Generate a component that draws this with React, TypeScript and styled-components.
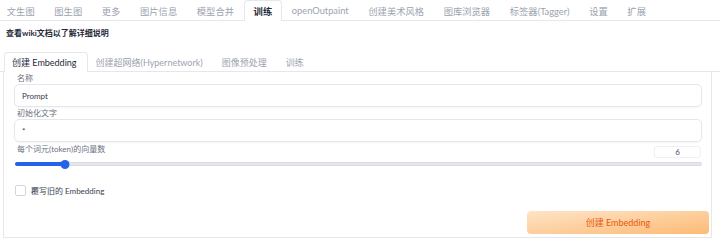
import React, { ReactElement } from "react";
import styled, { createGlobalStyle } from "styled-components";

const GlobalStyle = createGlobalStyle`
  body {
    margin: 0;
    background: #fff;
    font-family: Lato, "Noto Sans CJK SC", sans-serif;
    color: #374151;
  }
`;

const Page = styled.div`
  width: 720px;
  height: 246px;
  overflow: hidden;
`;

const TopBar = styled.div`
  display: flex;
  height: 20px;
  margin-left: -3px;
  border-bottom: 1px solid #e5e7eb;
`;

const TopTab = styled.div<{ $active?: boolean }>`
  display: flex;
  align-items: center;
  padding: 0 8.8px;
  font-size: 9.3px;
  color: ${(p) => (p.$active ? "#1f2937" : "#9ca3af")};
  font-weight: ${(p) => (p.$active ? 700 : 400)};
  background: #fff;
  border: 1px solid ${(p) => (p.$active ? "#e5e7eb" : "transparent")};
  border-bottom: none;
  border-radius: 4px 4px 0 0;
  margin-bottom: ${(p) => (p.$active ? "-1px" : "0")};
  white-space: nowrap;
`;

const Info = styled.div`
  padding: 6px 0 0 6px;
  height: 12px;
  line-height: 12px;
  font-size: 8px;
  font-weight: 700;
  color: #1f2937;
`;

const SubBar = styled.div`
  display: flex;
  height: 19px;
  margin-top: 13px;
  padding-left: 4px;
  border-bottom: 1px solid #e5e7eb;
`;

const SubTab = styled(TopTab)`
  padding: 0 10px 0 7px;
  font-size: 9px;
  font-weight: 400;
  color: ${(p) => (p.$active ? "#1f2937" : "#9ca3af")};
`;

const Panel = styled.div`
  margin: 0 8px 0 3px;
  height: 166px;
  box-sizing: border-box;
  border: 1px solid #e5e7eb;
  border-top: none;
  padding: 0 2px 3px 10px;
  display: flex;
  flex-direction: column;
`;

const Form = styled.div`
  margin-right: 7px;
  display: flex;
  flex-direction: column;
`;

const Label = styled.div`
  height: 12px;
  padding-left: 3px;
  font-size: 8px;
  line-height: 12px;
  color: #6b7280;
`;

const TextBox = styled.div`
  height: 23px;
  box-sizing: border-box;
  border: 1px solid #e5e7eb;
  border-radius: 5px;
  box-shadow: 0 1px 2px rgba(0, 0, 0, 0.04);
  padding: 0 7px;
  display: flex;
  align-items: center;
  font-size: 8px;
  color: #374151;
`;

const SliderHead = styled.div`
  display: flex;
  justify-content: space-between;
  align-items: flex-start;
  height: 17px;
  padding-top: 1px;
  box-sizing: border-box;
`;

const NumberBox = styled.div`
  width: 47px;
  height: 12px;
  margin-top: 3px;
  box-sizing: border-box;
  border: 1px solid #eef0f3;
  border-radius: 3px;
  font-size: 8px;
  color: #4b5563;
  display: flex;
  align-items: center;
  justify-content: center;
  margin-right: 1px;
`;

const Track = styled.div`
  position: relative;
  height: 10px;
  margin-left: 1px;
  display: flex;
  align-items: center;
`;

const Rail = styled.div`
  flex: 1;
  height: 4px;
  border-radius: 2px;
  background: #e5e7eb;
  border: 1px solid #d9dce1;
  box-sizing: border-box;
`;

const Fill = styled.div`
  position: absolute;
  left: 0;
  height: 4px;
  border-radius: 2px;
  background: #2563eb;
`;

const Thumb = styled.div`
  position: absolute;
  width: 9px;
  height: 9px;
  border-radius: 50%;
  background: #2563eb;
  transform: translateX(-50%);
`;

const CheckRow = styled.label`
  display: flex;
  align-items: center;
  gap: 5px;
  margin-top: 14px;
  margin-left: 1px;
  height: 14px;
  font-size: 8px;
  color: #374151;
`;

const Box = styled.span`
  width: 9px;
  height: 9px;
  border: 1px solid #d1d5db;
  border-radius: 2px;
  background: #fff;
`;

const Actions = styled.div`
  display: flex;
  justify-content: flex-end;
  margin-top: auto;
`;

const Primary = styled.button`
  width: 182px;
  height: 23px;
  border: none;
  border-radius: 4px;
  background: linear-gradient(to bottom right, #fee4c8, #fdba74);
  color: #ea580c;
  font-family: Lato, "Noto Sans CJK SC", sans-serif;
  font-size: 9px;
  cursor: pointer;
`;

const topTabs = [
  "文生图",
  "图生图",
  "更多",
  "图片信息",
  "模型合并",
  "训练",
  "openOutpaint",
  "创建美术风格",
  "图库浏览器",
  "标签器(Tagger)",
  "设置",
  "扩展",
];

const subTabs = ["创建 Embedding", "创建超网络(Hypernetwork)", "图像预处理", "训练"];

function App(): ReactElement {
  const value = 6;
  const pct = 7.3;
  return (
    <Page>
      <GlobalStyle />
      <TopBar>
        {topTabs.map((t) => (
          <TopTab key={t} $active={t === "训练"}>
            {t}
          </TopTab>
        ))}
      </TopBar>
      <Info>查看wiki文档以了解详细说明</Info>
      <SubBar>
        {subTabs.map((t, i) => (
          <SubTab key={t} $active={i === 0}>
            {t}
          </SubTab>
        ))}
      </SubBar>
      <Panel>
        <Form>
          <Label>名称</Label>
          <TextBox>Prompt</TextBox>
          <Label>初始化文字</Label>
          <TextBox>*</TextBox>
          <SliderHead>
            <Label>每个词元(token)的向量数</Label>
            <NumberBox>{value}</NumberBox>
          </SliderHead>
          <Track>
            <Rail />
            <Fill style={{ width: `${pct}%` }} />
            <Thumb style={{ left: `${pct}%` }} />
          </Track>
          <CheckRow>
            <Box />
            覆写旧的 Embedding
          </CheckRow>
        </Form>
        <Actions>
          <Primary>创建 Embedding</Primary>
        </Actions>
      </Panel>
    </Page>
  );
}

export default App;
